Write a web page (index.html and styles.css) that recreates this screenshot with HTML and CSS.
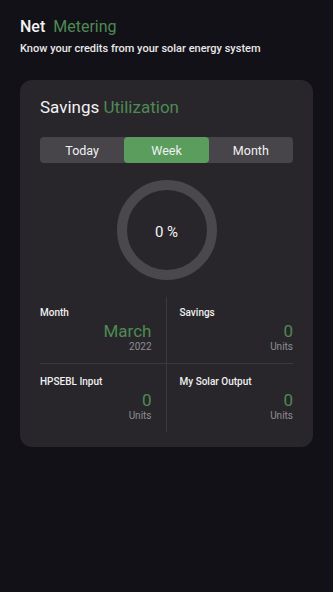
FILE: index.html
```html
<html lang="en">
<head>
    <meta charset="UTF-8">
    <meta name="viewport" content="width=device-width, initial-scale=1.0">
    <link rel="stylesheet" href="styles.css">
    <title>Net Metering</title>
</head>
<body>

    <header class="page-head">
        <h1 class="page-title">Net <span class="green">Metering</span></h1>
        <p class="page-sub">Know your credits from your solar energy system</p>
    </header>

    <main class="card">
        <h2 class="card-title">Savings <span class="green">Utilization</span></h2>

        <div class="tabs">
            <button type="button" class="tab">Today</button>
            <button type="button" class="tab active">Week</button>
            <button type="button" class="tab">Month</button>
        </div>

        <div class="ring-wrap">
            <div class="ring">0 %</div>
        </div>

        <div class="stats">
            <div class="stat top left">
                <div class="stat-label">Month</div>
                <div class="stat-value">March</div>
                <div class="stat-sub">2022</div>
            </div>
            <div class="stat top right">
                <div class="stat-label">Savings</div>
                <div class="stat-value">0</div>
                <div class="stat-sub">Units</div>
            </div>
            <div class="stat left">
                <div class="stat-label">HPSEBL Input</div>
                <div class="stat-value">0</div>
                <div class="stat-sub">Units</div>
            </div>
            <div class="stat right">
                <div class="stat-label">My Solar Output</div>
                <div class="stat-value">0</div>
                <div class="stat-sub">Units</div>
            </div>
        </div>
    </main>

</body>
</html>
```

FILE: styles.css
```css
body {
    background-color: #131118;
    margin: 0;
    padding: 0 20px;
    font-family: Roboto, "Liberation Sans", sans-serif;
    color: #f2f2f2;
}

.green {
    color: #4e8a52;
}

.page-head {
    padding-top: 17px;
}

.page-title {
    margin: 0;
    font-size: 16px;
    line-height: 20px;
    font-weight: 500;
}

.page-title .green {
    margin-left: 4px;
    font-weight: 400;
}

.page-sub {
    margin: 5px 0 0;
    font-size: 11px;
    line-height: 14px;
    font-weight: 500;
    color: #e8e8e8;
}

.card {
    margin-top: 24px;
    background-color: #28262b;
    border-radius: 12px;
    padding: 17px 20px 15px;
}

.card-title {
    margin: 0;
    font-size: 17px;
    line-height: 20px;
    font-weight: 400;
}

.tabs {
    margin-top: 20px;
    display: flex;
    height: 26px;
    background-color: #47454a;
    border-radius: 4px;
}

.tabs .tab {
    flex: 1;
    border: none;
    background: transparent;
    color: #f0f0f0;
    font-family: inherit;
    font-size: 12.5px;
    border-radius: 4px;
    padding: 0;
    cursor: pointer;
}

.tabs .tab.active {
    background-color: #5a9d5d;
}

.ring-wrap {
    display: flex;
    justify-content: center;
    margin-top: 17px;
}

.ring {
    width: 100px;
    height: 100px;
    box-sizing: border-box;
    border: 10px solid #4a484d;
    border-radius: 50%;
    display: flex;
    align-items: center;
    justify-content: center;
    padding-top: 4px;
    font-size: 15px;
    color: #f4f4f4;
}

.stats {
    margin-top: 17px;
    display: grid;
    grid-template-columns: 1fr 1fr;
}

.stat {
    padding: 10px 0 10px;
    text-align: right;
}

.stat.left {
    padding-right: 14px;
    border-right: 1px solid #3b393e;
}

.stat.right {
    padding-left: 13px;
}

.stat.top {
    border-bottom: 1px solid #3b393e;
}

.stat:not(.top) {
    padding-top: 12px;
    padding-bottom: 10px;
}

.stat-label {
    text-align: left;
    font-size: 10px;
    line-height: 12px;
    font-weight: 500;
    color: #f0f0f0;
}

.stat-value {
    font-size: 17px;
    line-height: 20px;
    color: #4e8a52;
    margin-top: 2px;
}

.stat-sub {
    font-size: 10px;
    line-height: 12px;
    color: #8f8d92;
}
```
